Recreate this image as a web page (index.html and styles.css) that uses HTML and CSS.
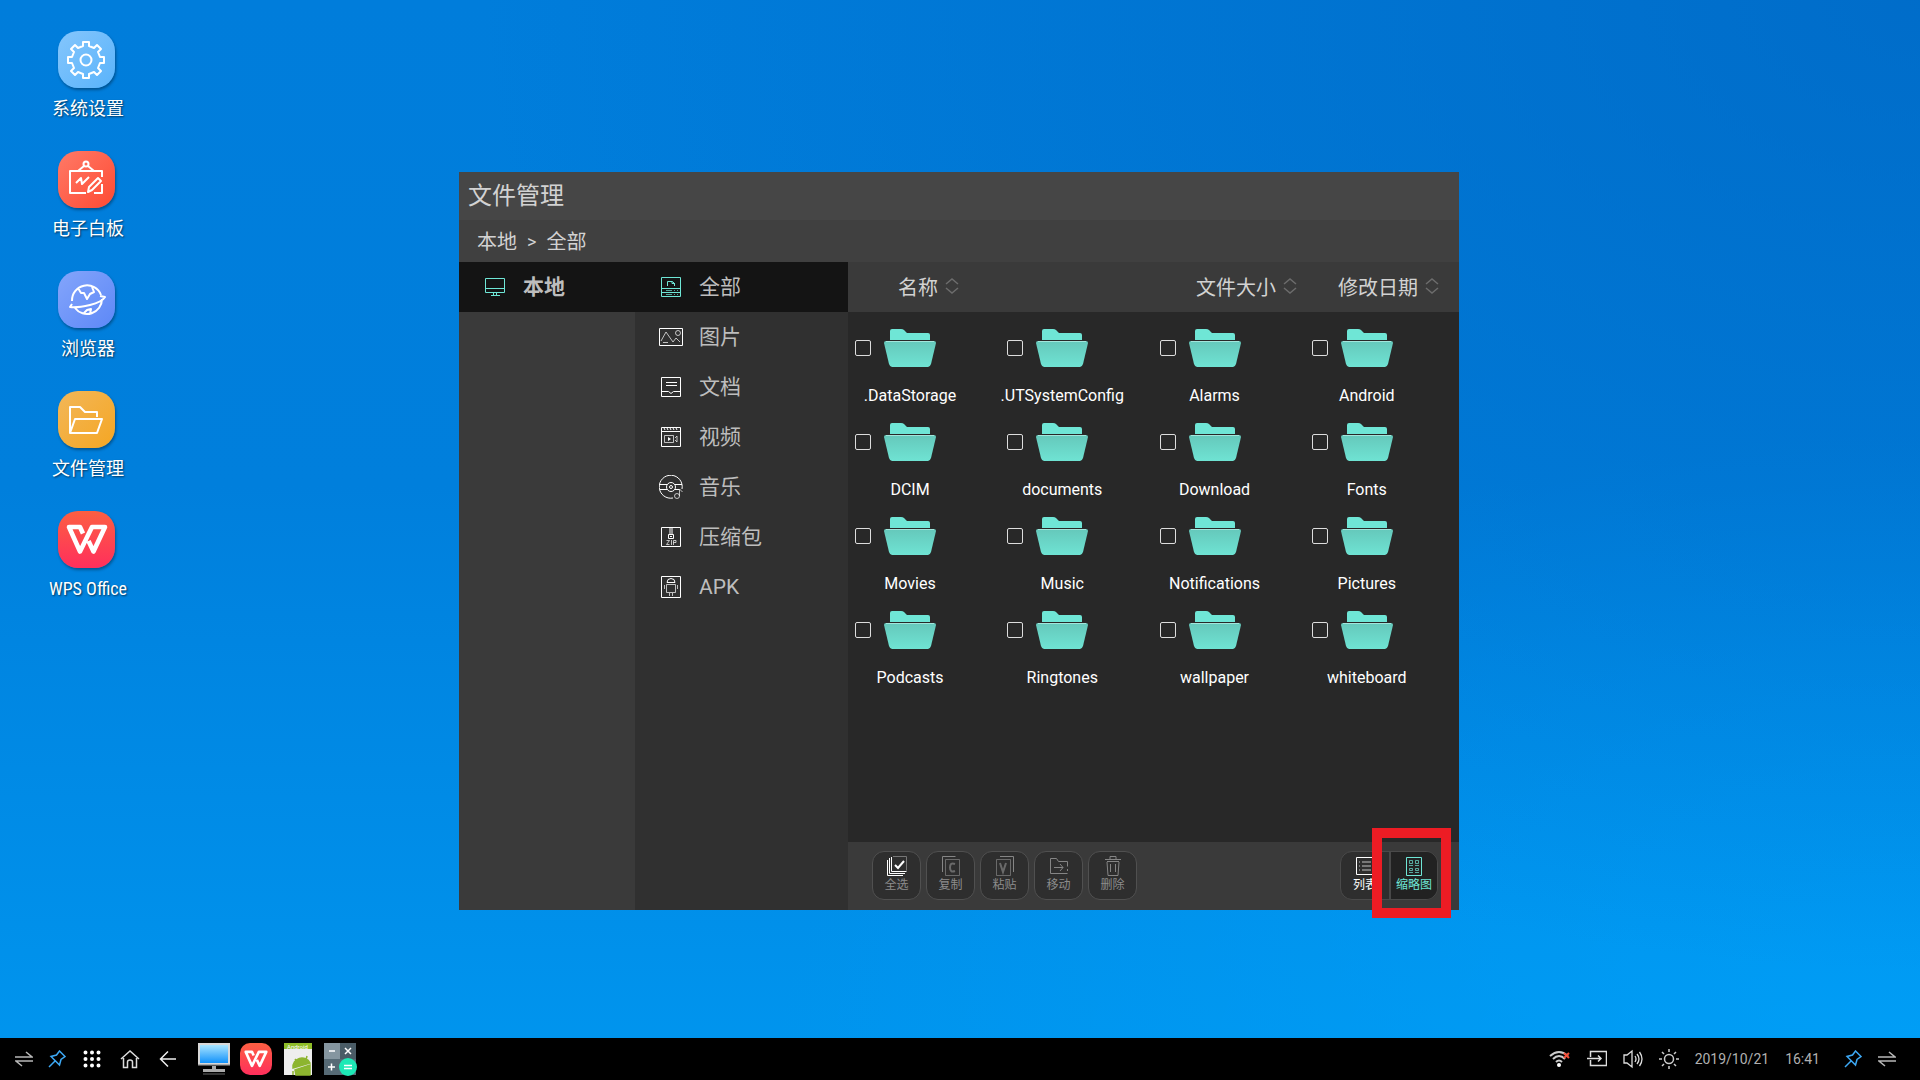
FILE: index.html
```html
<!DOCTYPE html>
<html lang="zh-CN">
<head>
<meta charset="utf-8">
<meta name="viewport" content="width=device-width, initial-scale=1">
<title>文件管理</title>
<link rel="stylesheet" href="styles.css">
</head>
<body>
<svg class="defs" aria-hidden="true">
  <defs>
    <linearGradient id="folderFront" x1="0" y1="0" x2="0" y2="1"><stop offset="0" stop-color="#65c8bb"/><stop offset="1" stop-color="#6fe3d3"/></linearGradient>
    <linearGradient id="screenBlue" x1="0" y1="0" x2="0" y2="1"><stop offset="0" stop-color="#a8e4ff"/><stop offset="1" stop-color="#1292fa"/></linearGradient>
    <linearGradient id="wpsRed" x1="0" y1="0" x2="0" y2="1"><stop offset="0" stop-color="#fc5f42"/><stop offset="1" stop-color="#ff2f5c"/></linearGradient>
  </defs>
  <symbol id="folder" viewBox="0 0 52 40">
    <path d="M6 12V3q0-2 2-2h9q2 0 3 1l3 3h21q2 0 2 2v5z" fill="#6fe6d6"/>
    <path d="M2 13h48q2 0 2 2l-5 21q-1 3-3 3H8q-2 0-3-3L0 15q0-2 2-2z" fill="url(#folderFront)"/>
    <path d="M2 13.500h48" stroke="#a2e6dc" fill="none"/>
  </symbol>
  <symbol id="sort" viewBox="0 0 14 18"><path d="M1 7l6-5 6 5M1 11l6 5 6-5" fill="none" stroke="#6c6c6c" stroke-width="1.500"/></symbol>
  <symbol id="wps" viewBox="0 0 42 31"><path d="M17 9.500L14 3H3l11 24.500L26 3h13L27.500 27.500 22.500 17" fill="none" stroke="#fff" stroke-width="4.600" stroke-linejoin="round"/></symbol>
  <symbol id="pin" viewBox="0 0 18 18"><path d="M11.500 1L17 6.500l-4 3L11.500 15 3 6.500 8.500 5zM7 11l-6 6" fill="none" stroke="#3da9f5" stroke-width="1.500"/></symbol>
  <symbol id="swap" viewBox="0 0 18 18"><path d="M0 7h17l-6-5M18 11H1l6 5" fill="none" stroke="#b8b8b8" stroke-width="1.500"/></symbol>
</svg>

<main class="desktop">
  <nav class="shortcuts" aria-label="桌面">
    <a class="shortcut" href="#"><span class="tile tile-settings"><svg viewBox="0 0 57 57"><path d="M25 15v-4h6v4l5 2 3-3 4 4-3 3 2 5h4v6h-4l-2 5 3 3-4 4-3-3-5 2v4h-6v-4l-5-2-3 3-4-4 3-3-2-5h-4v-6h4l2-5-3-3 4-4 3 3z"/><circle cx="28" cy="29" r="5.500"/></svg></span>系统设置</a>
    <a class="shortcut" href="#"><span class="tile tile-board"><svg viewBox="0 0 57 57"><path d="M44 26v-6H12v22h16M36 42h8v-9M20 20l6-5M36 20l-6-5M18 32l5-5 1 6 7-7"/><circle cx="28" cy="13" r="2.500"/><path d="M30 41l1-5 9-9 3 3-9 9z"/></svg></span>电子白板</a>
    <a class="shortcut" href="#"><span class="tile tile-browser"><svg viewBox="0 0 57 57"><path d="M14 30a15 15 0 0 1 29-6M44 28a15 15 0 0 1-27 9M42 25l5 1q-3 5-15 8-13 3-20 2l2-3M20 17l3 5 3 0 3 6 3-5 4-2-2-5M26 42l3-3 4-1-1 5"/></svg></span>浏览器</a>
    <a class="shortcut" href="#"><span class="tile tile-files"><svg viewBox="0 0 57 57"><path d="M12 42V16h10l5 5h12v5M12 42l5-14h27l-5 14z"/></svg></span>文件管理</a>
    <a class="shortcut" href="#"><span class="tile tile-wps"><svg class="wps-mark"><use href="#wps"/></svg></span><span class="latin">WPS Office</span></a>
  </nav>

  <section class="window" aria-label="文件管理">
    <h1 class="title">文件管理</h1>
    <nav class="crumbs" aria-label="路径"><a href="#">本地</a><span class="crumb-sep">&gt;</span><a href="#">全部</a></nav>
    <div class="panes">
      <nav class="devices" aria-label="设备">
        <a class="device active" href="#"><svg viewBox="0 0 22 20"><path d="M1.500 1.500h19v14h-19zM1 11.500h20M9.500 15.500v3M12.500 15.500v3M7 18.500h9"/></svg>本地</a>
      </nav>
      <nav class="types" aria-label="类型">
        <a class="type active" href="#"><svg viewBox="0 0 24 24"><path d="M2.500 2.500h19v19H2.500zM2.500 13.500h19M2.500 17.500h19M8.500 11V6.500h5l2 2V11M13 6.500v2h3"/><path class="dim" d="M7 15.500h6M15 15.500h1M18 15.500h1M7 19.500h6M15 19.500h1M18 19.500h1"/></svg>全部</a>
        <a class="type" href="#"><svg viewBox="0 0 24 24"><path d="M.500 3.500h23v17H.500z"/><path class="dim" d="M2 16l5-9 7 10 3-4 4 4M4 17.500h5"/><circle class="dim" cx="19" cy="8" r="2.500"/></svg>图片</a>
        <a class="type" href="#"><svg viewBox="0 0 24 24"><path d="M2.500 2.500h19v19h-19zM7 7.500h11M7 10.500h11M2.500 16.500h7l2.500 2 2.500-2h7"/></svg>文档</a>
        <a class="type" href="#"><svg viewBox="0 0 24 24"><path d="M2.500 2.500h19v19h-19zM2.500 6.500h19M5 3l1 2M8 3l1 2M11 3l1 2M14 3l1 2M17 3l1 2"/><path class="dim" d="M5.500 10.500h9v7h-9zM16 13l2-2v6l-2-2"/><path class="solid" d="M9 12l3 2-3 2z"/></svg>视频</a>
        <a class="type" href="#"><svg viewBox="0 0 24 24"><path d="M14 23A11.500 11.500 0 1 1 23 14M1 9.500h7M1 14.500h7M16 9.500h7M16 14.500h4"/><circle cx="12" cy="12" r="4.500"/><circle cx="12" cy="12" r="1.500"/><path class="dim" d="M20.500 21v-7l3 3"/><circle class="dim" cx="18" cy="21" r="2.500"/></svg>音乐</a>
        <a class="type" href="#"><svg viewBox="0 0 24 24"><path d="M2.500 2.500h19v19h-19zM10 4h4M10 6h4M10 8h4M9.500 9.500h5v4h-5zM11 11.500h2"/><path class="dim" d="M7.500 15.500h3l-3 4h3M12.500 15v5M14.500 20v-4.500h2.500v2h-2.500"/></svg>压缩包</a>
        <a class="type" href="#"><svg viewBox="0 0 24 24"><path d="M2.500 1.500h19v21h-19zM8 7.500q0-4 4-4t4 4z"/><path class="dim" d="M7.500 9.500h9v8h-9zM5.500 10v4M18.500 10v4M10.500 18v3M13.500 18v3"/></svg>APK</a>
      </nav>
      <div class="browser">
        <div class="columns">
          <button class="sort sort-name" type="button">名称<svg><use href="#sort"/></svg></button>
          <button class="sort" type="button">文件大小<svg><use href="#sort"/></svg></button>
          <button class="sort" type="button">修改日期<svg><use href="#sort"/></svg></button>
        </div>
        <div class="grid">
          <label class="item"><input type="checkbox"><svg><use href="#folder"/></svg><span>.DataStorage</span></label>
          <label class="item"><input type="checkbox"><svg><use href="#folder"/></svg><span>.UTSystemConfig</span></label>
          <label class="item"><input type="checkbox"><svg><use href="#folder"/></svg><span>Alarms</span></label>
          <label class="item"><input type="checkbox"><svg><use href="#folder"/></svg><span>Android</span></label>
          <label class="item"><input type="checkbox"><svg><use href="#folder"/></svg><span>DCIM</span></label>
          <label class="item"><input type="checkbox"><svg><use href="#folder"/></svg><span>documents</span></label>
          <label class="item"><input type="checkbox"><svg><use href="#folder"/></svg><span>Download</span></label>
          <label class="item"><input type="checkbox"><svg><use href="#folder"/></svg><span>Fonts</span></label>
          <label class="item"><input type="checkbox"><svg><use href="#folder"/></svg><span>Movies</span></label>
          <label class="item"><input type="checkbox"><svg><use href="#folder"/></svg><span>Music</span></label>
          <label class="item"><input type="checkbox"><svg><use href="#folder"/></svg><span>Notifications</span></label>
          <label class="item"><input type="checkbox"><svg><use href="#folder"/></svg><span>Pictures</span></label>
          <label class="item"><input type="checkbox"><svg><use href="#folder"/></svg><span>Podcasts</span></label>
          <label class="item"><input type="checkbox"><svg><use href="#folder"/></svg><span>Ringtones</span></label>
          <label class="item"><input type="checkbox"><svg><use href="#folder"/></svg><span>wallpaper</span></label>
          <label class="item"><input type="checkbox"><svg><use href="#folder"/></svg><span>whiteboard</span></label>
        </div>
        <div class="toolbar">
          <button class="tool" type="button"><svg class="bright" viewBox="0 0 20 20"><path d="M.500 4v15.500H16M2.500 2v15.500H18M4.500 1v14.500H19.500"/><path d="M6 .500h13.500v14" stroke="#777"/><path d="M8 9l3 3 6-7" stroke-width="2"/></svg>全选</button>
          <button class="tool" type="button"><svg viewBox="0 0 20 20"><path d="M1.500 16V.500h13"/><path class="dim" d="M4.500 3.500h14v16h-14z"/><path class="dim" d="M14 8q-5-2-5 3.500t5 3.500" stroke-width="2"/></svg>复制</button>
          <button class="tool" type="button"><svg viewBox="0 0 20 20"><path d="M5 .500h13.500V16"/><path class="dim" d="M1.500 3.500h14v16h-14z"/><path class="dim" d="M5 7l3 9 3-9" stroke-width="2"/></svg>粘贴</button>
          <button class="tool" type="button"><svg viewBox="0 0 20 20"><path d="M1.500 17.500v-15h6l2 3h9v5M18.500 13v2M1.500 17.500h17M5 11.500h9M11 8l3 3.500-3 3.500"/></svg>移动</button>
          <button class="tool" type="button"><svg viewBox="0 0 20 20"><path d="M2 3.500h16M7 3V.500h6V3M4 6l1 13.500h10L16 6M7.500 8v8M12.500 8v8M4 5.500h12"/></svg>删除</button>
          <div class="views">
            <button class="view" type="button"><svg viewBox="0 0 20 20"><path d="M1.500 1.500h17v17h-17z"/><path class="dim" d="M4 6h1M7 6h9M4 10h1M7 10h9M4 14h1M7 14h9"/></svg>列表</button>
            <button class="view active" type="button"><svg viewBox="0 0 20 20"><path d="M2.500 1.500h15v18h-15z"/><path class="dim" d="M5.500 4.500h3v3h-3zM11.500 4.500h3v3h-3zM5 9.500h4M11 9.500h4M5.500 12.500h3v2h-3zM11.500 12.500h3v2h-3zM5 16.500h4M11 16.500h4"/></svg>缩略图</button>
            <span class="marker"></span>
          </div>
        </div>
      </div>
    </div>
  </section>
</main>

<footer class="taskbar">
  <div class="keys">
    <button type="button" aria-label="切换"><svg class="i18"><use href="#swap"/></svg></button>
    <button type="button" aria-label="固定"><svg class="i18"><use href="#pin"/></svg></button>
    <button type="button" aria-label="应用"><svg class="i18" viewBox="0 0 18 18"><path d="M2.500 2.500h0M9 2.500h0M15.500 2.500h0M2.500 9h0M9 9h0M15.500 9h0M2.500 15.500h0M9 15.500h0M15.500 15.500h0" stroke="#fff" stroke-width="4" stroke-linecap="round"/></svg></button>
    <button type="button" aria-label="主页"><svg class="i20" viewBox="0 0 20 20"><path d="M1 10l9-8 9 8M3.500 9v9.500h4V13q0-2 2.500-2t2.500 2v5.500h4V9" fill="none" stroke="#ddd" stroke-width="1.500"/></svg></button>
    <button type="button" aria-label="返回"><svg class="i18" viewBox="0 0 18 18"><path d="M17 9H2M9 1.500L1.500 9 9 16.500" fill="none" stroke="#eee" stroke-width="1.500"/></svg></button>
  </div>
  <div class="apps">
    <button type="button" aria-label="桌面"><svg viewBox="0 0 34 34"><path d="M1 1h32v22H1z" fill="#d8d8d8"/><path d="M3 3h28v18H3z" fill="url(#screenBlue)"/><path d="M1 22h32v1.500H1zM15 24h4v3h-4zM6 27h22v3H6z" fill="#aaa"/><path d="M6 31h22v2H6z" fill="#333"/></svg></button>
    <button type="button" aria-label="WPS Office"><svg viewBox="0 0 34 34"><rect x="1" y="1" width="32" height="32" rx="10" fill="url(#wpsRed)"/><use href="#wps" x="5" y="8" width="24" height="18"/></svg></button>
    <button type="button" aria-label="安装包"><svg viewBox="0 0 34 34"><path d="M3 1h28v32H3z" fill="#eee"/><path d="M3 1h28v6H3z" fill="#8fbd28"/><path d="M12 26a9 9 0 0 1 17-5zM14 28l15-5v10H15zM14 17l3 4M26 14l-1 4M12 29v4" fill="#8db52f" stroke="#8db52f" stroke-width="1.500"/><text x="6" y="7" font-size="6" fill="#fff" font-family="Roboto, sans-serif">Android</text></svg></button>
    <button type="button" aria-label="计算器"><svg viewBox="0 0 34 34"><path d="M1 1h16v16H1z" fill="#8596a0"/><path d="M17 1h16v16H17z" fill="#4a5c66"/><path d="M1 17h32v16H1z" fill="#566a75"/><path d="M6 9h6M22 6l6 6M28 6l-6 6M5 25h7M8.500 21.500v7" stroke="#fff" stroke-width="1.500"/><circle cx="25" cy="25" r="9" fill="#1de9b6"/><path d="M21 23.500h8M21 26.500h8" stroke="#fff" stroke-width="1.500"/></svg></button>
  </div>
  <div class="tray">
    <svg class="i22" viewBox="0 0 22 22"><path d="M1 8q9-8 18 0M4 11q6-6 12 0M7 14q3-3 6 0" fill="none" stroke="#ccc" stroke-width="2"/><circle cx="10" cy="17" r="2" fill="#fff"/><path d="M15 5l5 5M20 5l-5 5" stroke="#f4503a" stroke-width="2"/></svg>
    <svg class="i20" viewBox="0 0 20 20"><path d="M3.500 8V2.500h16v14h-16V11M0 9.500h14M11 6.500l3 3-3 3" fill="none" stroke="#ddd" stroke-width="1.500"/></svg>
    <svg class="i20" viewBox="0 0 20 20"><path d="M1 6h3l5-4v16l-5-4H1zM12 7q2 3 0 6M14 5q4 5 0 10M16.500 3q5 7 0 14" fill="none" stroke="#ddd"  stroke-width="1.300"/></svg>
    <svg class="i20" viewBox="0 0 20 20"><circle cx="10" cy="10" r="4.500" fill="none" stroke="#ccc" stroke-width="1.500"/><path d="M10 0v3M10 17v3M0 10h3M17 10h3M3 3l2 2M15 15l2 2M3 17l2-2M15 5l2-2" stroke="#ccc" stroke-width="1.500"/></svg>
    <time>2019/10/21</time><time class="clock">16:41</time>
    <button type="button" aria-label="固定"><svg class="i18"><use href="#pin"/></svg></button>
    <button type="button" aria-label="切换"><svg class="i18"><use href="#swap"/></svg></button>
  </div>
</footer>
</body>
</html>
```

FILE: styles.css
```css
* { box-sizing: border-box; }
body {
  margin: 0;
  min-height: 100vh;
  display: flex;
  flex-direction: column;
  font-family: Roboto, "Noto Sans CJK SC", sans-serif;
  color: #d2d2d2;
  background:
    radial-gradient(ellipse 75% 90% at 100% 0%, rgba(0, 98, 190, .6), rgba(0, 98, 190, 0)),
    radial-gradient(ellipse 60% 60% at 100% 100%, rgba(0, 168, 255, .5), rgba(0, 168, 255, 0)),
    linear-gradient(180deg, #007ddb 0%, #007fdc 45%, #0096ef 100%);
}
a { color: inherit; text-decoration: none; }
button { margin: 0; padding: 0; border: 0; background: none; color: inherit; font: inherit; }
svg { display: block; flex: none; }
.defs { position: absolute; width: 0; height: 0; }
.dim { opacity: .7; }

.desktop {
  flex: 1;
  display: grid;
  grid-template-columns: minmax(160px, 1fr) minmax(0, 1000px) minmax(0, 1fr);
  align-items: center;
  padding-right: 2px;
}

.shortcuts { align-self: start; width: 176px; padding-top: 31px; display: grid; grid-auto-rows: 120px; }
.shortcut {
  display: flex;
  flex-direction: column;
  align-items: center;
  gap: 7px;
  font-size: 18px;
  line-height: 28px;
  color: #fff;
  text-shadow: 1px 1px 2px rgba(0, 0, 0, .6);
}
.latin { font-family: "Roboto Condensed", Roboto, sans-serif; }
.tile {
  width: 57px;
  height: 57px;
  margin-right: 3px;
  display: grid;
  place-items: center;
  border-radius: 20px;
  box-shadow: 1px 2px 3px rgba(0, 0, 0, .35);
}
.tile svg { width: 57px; height: 57px; fill: none; stroke: #fff; stroke-width: 2; stroke-linejoin: round; }
.tile .wps-mark { width: 42px; height: 31px; }
.tile-settings { background: linear-gradient(135deg, #85c6fc, #59b3fb); }
.tile-board { background: linear-gradient(135deg, #ff7a67, #fe4a33); }
.tile-browser { background: linear-gradient(135deg, #84a5fb, #5d88f7); }
.tile-files { background: linear-gradient(135deg, #f2b759, #f5a623); }
.tile-wps { background: linear-gradient(#fc5f42, #ff2f5c); }

.window { margin-top: 44px; background: #3a3a3a; }
.title { margin: 0; padding: 0 9px; font-size: 24px; line-height: 48px; font-weight: 400; background: #464646; }
.crumbs { display: flex; gap: 10px; height: 42px; padding: 0 18px; font-size: 20px; line-height: 44px; background: #404040; }
.crumb-sep { font-size: 18px; }

.panes { display: grid; grid-template-columns: 176px 213px minmax(0, 1fr); }
.device, .type {
  display: flex;
  align-items: center;
  height: 50px;
  padding-bottom: 1px;
  font-size: 21px;
  line-height: 24px;
  color: #bdbdbd;
}
.device { gap: 17px; padding-left: 25px; font-weight: 700; }
.type { gap: 16px; padding-left: 24px; }
.device svg { width: 22px; height: 20px; }
.type svg { width: 24px; height: 24px; }
.device svg, .type svg { fill: none; stroke: #fff; }
.type .solid { fill: #fff; stroke: none; }
.types { background: #303030; }
.device.active, .type.active { background: #141414; }
.device.active svg, .type.active svg { stroke: #6fe6d6; }

.columns { display: flex; height: 50px; padding: 0 20px 2px 0; gap: 41px; font-size: 20px; }
.sort { display: flex; align-items: center; gap: 7px; }
.sort svg { width: 14px; height: 18px; }
.sort-name { margin: 0 auto 0 50px; }

.grid {
  display: grid;
  grid-template-columns: repeat(4, 1fr);
  grid-auto-rows: 94px;
  min-height: 530px;
  padding: 8px 2px 0 0;
  background: #282828;
}
.item {
  display: grid;
  grid-template-columns: 16px 52px;
  grid-template-rows: 56px 24px;
  gap: 7px 13px;
  align-items: center;
  align-content: start;
  padding-left: 7px;
  color: #fff;
  font-size: 16px;
  line-height: 24px;
}
.item input { appearance: none; width: 16px; height: 16px; margin: 0; border: 1px solid #ddd; border-radius: 2px; }
.item svg { width: 52px; height: 40px; }
.item span { grid-column: 2; justify-self: center; padding-top: 2px; }

.toolbar { display: flex; align-items: center; gap: 5px; height: 68px; padding: 0 21px 2px 24px; }
.tool, .view {
  display: flex;
  flex-direction: column;
  align-items: center;
  justify-content: center;
  width: 49px;
  height: 49px;
  font-size: 12px;
  line-height: 18px;
}
.tool { border: 1px solid #505050; border-radius: 12px; background: #2e2e2e; color: #8c8c8c; }
.tool svg, .view svg { width: 20px; height: 20px; fill: none; stroke: #858585; }
.tool .bright { stroke: #fff; }
.views { position: relative; display: flex; margin-left: auto; border: 1px solid #4a4a4a; border-radius: 12px; background: #2e2e2e; }
.view { width: 48px; height: 47px; color: #fff; }
.view svg { stroke: #fff; }
.view.active { border-left: 2px solid #484848; border-radius: 0 11px 11px 0; background: #222; color: #6fe6d6; }
.view.active svg { stroke: #6fe6d6; }
.marker { position: absolute; top: -24px; right: -14px; width: 79px; height: 90px; border: 10px solid #ed1c24; }

.taskbar { display: flex; align-items: center; height: 42px; padding: 0 24px 0 7px; background: #000; }
.keys, .apps, .tray { display: flex; align-items: center; }
.keys { display: grid; grid-template-columns: 34px 32px repeat(3, 38px); justify-items: center; margin-right: 10px; }
.keys button { display: grid; place-items: center; }
.apps { gap: 8px; margin-right: auto; }
.apps svg { width: 34px; height: 34px; }
.tray { gap: 16px; font-size: 14px; color: #b0b0b0; }
.clock { margin-right: 8px; }
.i18 { width: 18px; height: 18px; }
.i20 { width: 20px; height: 20px; }
.i22 { width: 22px; height: 22px; }
```
